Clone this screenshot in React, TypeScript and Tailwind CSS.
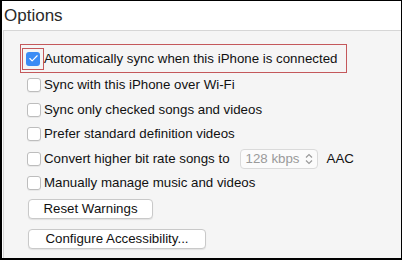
import { Check } from 'lucide-react';

function Box({ checked = false }: { checked?: boolean }) {
  return checked ? (
    <span className="flex h-[14px] w-[14px] items-center justify-center rounded-[3px] bg-[#3b8cf5]">
      <Check className="h-[11px] w-[11px] text-white" strokeWidth={2.5} />
    </span>
  ) : (
    <span className="block h-[14px] w-[14px] rounded-[3px] border border-[#bdbdbd] bg-white shadow-[0_1px_0_rgba(0,0,0,0.05)]" />
  );
}

function Row({ label, children }: { label: string; children?: React.ReactNode }) {
  return (
    <div className="flex h-[24.5px] items-center pl-[23px]">
      <Box />
      <span className="ml-[3px]">{label}</span>
      {children}
    </div>
  );
}

function Button({ label, width }: { label: string; width: string }) {
  return (
    <button
      className={`ml-[24px] flex h-[20px] items-center justify-center rounded-[4px] border border-[#c9c9c9] bg-white text-[13.3px] leading-none text-[#111] shadow-[0_1px_1px_rgba(0,0,0,0.08)] ${width}`}
    >
      {label}
    </button>
  );
}

export default function App() {
  return (
    <div className="flex h-[260px] w-[402px] flex-col overflow-hidden border-b-2 border-l-2 border-r border-t border-black bg-white font-['Liberation_Sans',Arial,sans-serif] text-[13.3px] text-[#111]">
      <div className="h-[29px] shrink-0 pl-[2px] pt-[6px] text-[17px] leading-[17px] text-[#2a2a2a]">Options</div>

      <div className="ml-[1px] flex-1 border-l border-t border-[#d6d6d6] bg-[#f5f5f5] pt-[13px]">
        {/* highlighted first option */}
        <div className="ml-[16px] flex h-[29px] w-[327px] items-center border border-[#c4585b] pl-[1px]">
          <span className="flex h-[22px] w-[22px] items-center justify-center border border-[#c4585b]">
            <Box checked />
          </span>
          <span>Automatically sync when this iPhone is connected</span>
        </div>

        <Row label="Sync with this iPhone over Wi-Fi" />
        <Row label="Sync only checked songs and videos" />
        <Row label="Prefer standard definition videos" />
        <Row label="Convert higher bit rate songs to">
          <span className="ml-[10px] flex h-[20px] w-[78px] items-center justify-between rounded-[4px] border border-[#dadada] bg-[#fbfbfb] pl-[5px] pr-[4px] text-[#9a9a9a]">
            128 kbps
            <svg width="8" height="12" viewBox="0 0 8 12" fill="none" stroke="#9a9a9a" strokeWidth="1.2">
              <path d="M1 4.5 4 1.5 7 4.5" />
              <path d="M1 7.5 4 10.5 7 7.5" />
            </svg>
          </span>
          <span className="ml-[9px]">AAC</span>
        </Row>
        <Row label="Manually manage music and videos" />

        <div className="mt-[3.5px] flex flex-col gap-[10px]">
          <Button label="Reset Warnings" width="w-[125px]" />
          <Button label="Configure Accessibility..." width="w-[178px]" />
        </div>
      </div>
    </div>
  );
}
